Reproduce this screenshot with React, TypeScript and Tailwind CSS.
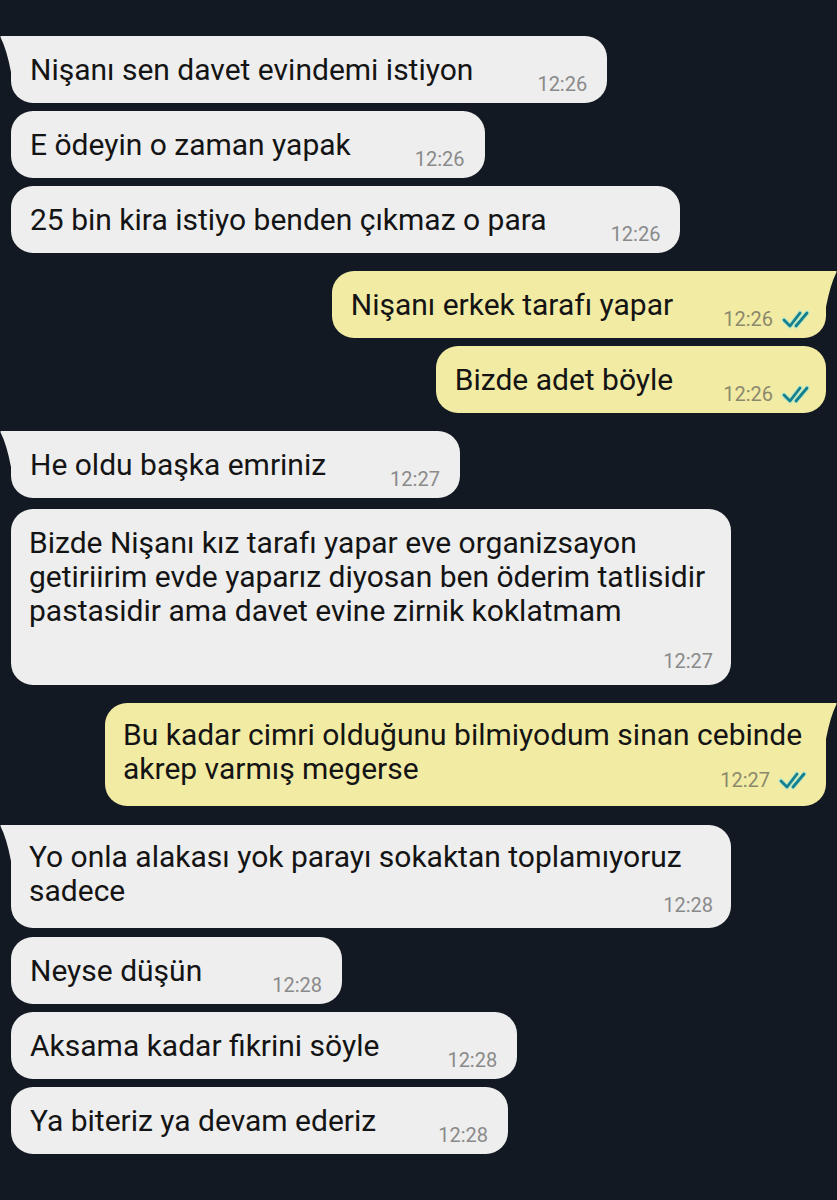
import React from "react";

type Msg = {
  side: "l" | "r";
  lines: string[];
  time: string;
  tail?: boolean;
  gap: number;
  width?: string;
  layout: "single" | "row" | "col";
  timeMt: string;
  textGap?: string;
  pb?: string;
};

const LEFT = "#eeeeee";
const RIGHT = "#f2eba3";

function Checks() {
  return (
    <svg width="30" height="20" viewBox="0 0 30 20" className="ml-[8px]">
      <g fill="none" strokeLinecap="round" strokeLinejoin="round">
        <g stroke="#7fe6ee" strokeWidth="5" opacity="0.45">
          <path d="M3 11 L9 17 L19 4" />
          <path d="M15 17 L26 4" />
        </g>
        <g stroke="#14808d" strokeWidth="2.8">
          <path d="M3 11 L9 17 L19 4" />
          <path d="M15 17 L26 4" />
        </g>
      </g>
    </svg>
  );
}

function TailLeft() {
  return (
    <svg width="11" height="36" viewBox="0 0 11 36" className="shrink-0 self-start">
      <path d="M11 0 L1 0 Q0 0 0.6 1.6 Q6.5 13 11 36 Z" fill={LEFT} />
    </svg>
  );
}

function TailRight() {
  return (
    <svg width="11" height="36" viewBox="0 0 11 36" className="shrink-0 self-start">
      <path d="M0 0 L10 0 Q11 0 10.4 1.6 Q4.5 13 0 36 Z" fill={RIGHT} />
    </svg>
  );
}

function Bubble({ m }: { m: Msg }) {
  const isL = m.side === "l";
  const bg = isL ? "bg-[#eeeeee]" : "bg-[#f2eba3]";
  const timeColor = isL ? "text-[#8a8a8a]" : "text-[#8b896c]";
  const radius = m.tail
    ? isL
      ? "rounded-[22px] rounded-tl-none"
      : "rounded-[22px] rounded-tr-none"
    : "rounded-[22px]";
  const textCls = "text-[30px] leading-[34px] text-[#141414] whitespace-nowrap";

  const time = (
    <div className={`flex items-center shrink-0 ${m.timeMt}`}>
      <span className={`text-[20px] leading-[20px] ${timeColor}`}>{m.time}</span>
      {!isL && <Checks />}
    </div>
  );

  let inner: React.ReactNode;
  if (m.layout === "col") {
    inner = (
      <div className={`flex flex-col pl-[18px] pr-[18px] pt-[17px] ${m.pb ?? "pb-[14px]"} ${bg} ${radius} ${m.width ?? ""}`}>
        <div className={textCls}>
          {m.lines.map((l, i) => (
            <div key={i}>{l}</div>
          ))}
        </div>
        <div className="self-end">{time}</div>
      </div>
    );
  } else if (m.layout === "row") {
    const last = m.lines[m.lines.length - 1];
    const first = m.lines.slice(0, -1);
    inner = (
      <div className={`flex flex-col pl-[18px] pr-[18px] pt-[15px] ${m.pb ?? "pb-[14px]"} ${bg} ${radius} ${m.width ?? ""}`}>
        <div className={textCls}>
          {first.map((l, i) => (
            <div key={i}>{l}</div>
          ))}
        </div>
        <div className="flex items-start justify-between">
          <div className={textCls}>{last}</div>
          {time}
        </div>
      </div>
    );
  } else {
    inner = (
      <div
        className={`flex items-start justify-between ${
          isL ? `pl-[19px] pr-[20px] ${m.textGap ?? "gap-[64px]"}` : "pl-[19px] pr-[15px] gap-[50px]"
        } pt-[17px] pb-[9px] ${bg} ${radius} ${m.width ?? ""}`}
      >
        <div className={textCls}>{m.lines[0]}</div>
        {time}
      </div>
    );
  }

  return (
    <div className={`flex ${isL ? "justify-start" : "justify-end"}`} style={{ marginTop: m.gap }}>
      {isL && (m.tail ? <TailLeft /> : <div className="w-[11px] shrink-0" />)}
      {inner}
      {!isL && (m.tail ? <TailRight /> : <div className="w-[11px] shrink-0" />)}
    </div>
  );
}

const msgs: Msg[] = [
  { side: "l", lines: ["Nişanı sen davet evindemi istiyon"], time: "12:26", tail: true, gap: 0, layout: "single", timeMt: "mt-[21px]" },
  { side: "l", lines: ["E ödeyin o zaman yapak"], time: "12:26", gap: 8, layout: "single", timeMt: "mt-[21px]" },
  { side: "l", lines: ["25 bin kira istiyo benden çıkmaz o para"], time: "12:26", gap: 8, layout: "single", timeMt: "mt-[21px]" },
  { side: "r", lines: ["Nişanı erkek tarafı yapar"], time: "12:26", tail: true, gap: 18, layout: "single", timeMt: "mt-[21px]" },
  { side: "r", lines: ["Bizde adet böyle"], time: "12:26", gap: 8, layout: "single", timeMt: "mt-[21px]" },
  { side: "l", lines: ["He oldu başka emriniz"], time: "12:27", tail: true, gap: 18, layout: "single", timeMt: "mt-[21px]" },
  {
    side: "l",
    lines: [
      "Bizde Nişanı kız tarafı yapar eve organizsayon",
      "getiriirim evde yaparız diyosan ben öderim tatlisidir",
      "pastasidir ama davet evine zirnik koklatmam",
    ],
    time: "12:27",
    gap: 11,
    layout: "col",
    timeMt: "mt-[23px]",
    width: "w-[720px]",
    pb: "pb-[14px]",
  },
  {
    side: "r",
    lines: ["Bu kadar cimri olduğunu bilmiyodum sinan cebinde", "akrep varmış megerse"],
    time: "12:27",
    tail: true,
    gap: 18,
    layout: "row",
    timeMt: "mt-[18px]",
    width: "w-[721px]",
    pb: "pb-[16px]",
  },
  {
    side: "l",
    lines: ["Yo onla alakası yok parayı sokaktan toplamıyoruz", "sadece"],
    time: "12:28",
    tail: true,
    gap: 19,
    layout: "row",
    timeMt: "mt-[21px]",
    width: "w-[720px]",
    pb: "pb-[13px]",
  },
  { side: "l", lines: ["Neyse düşün"], time: "12:28", gap: 9, layout: "single", timeMt: "mt-[21px]", textGap: "gap-[70px]" },
  { side: "l", lines: ["Aksama kadar fikrini söyle"], time: "12:28", gap: 8, layout: "single", timeMt: "mt-[21px]", textGap: "gap-[68px]" },
  { side: "l", lines: ["Ya biteriz ya devam ederiz"], time: "12:28", gap: 8, layout: "single", timeMt: "mt-[21px]", textGap: "gap-[62px]" },
];

export default function App() {
  return (
    <div
      className="w-[837px] h-[1200px] overflow-hidden bg-[#131922] pt-[36px] flex flex-col"
      style={{ fontFamily: "Roboto, 'Noto Sans', sans-serif" }}
    >
      {msgs.map((m, i) => (
        <Bubble key={i} m={m} />
      ))}
    </div>
  );
}
